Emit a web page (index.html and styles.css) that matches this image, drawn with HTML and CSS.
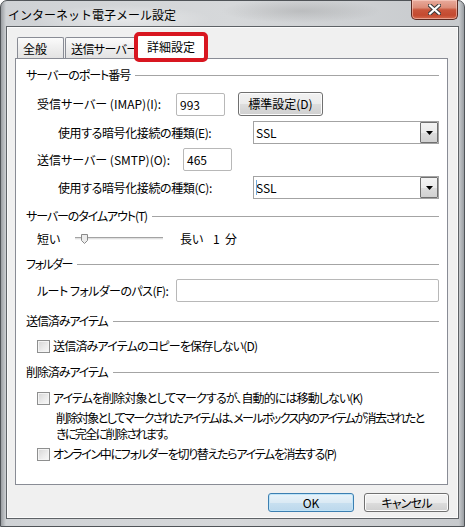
FILE: index.html
```html
<!DOCTYPE html>
<html lang="ja">
<head>
<meta charset="utf-8">
<title>インターネット電子メール設定</title>
<link rel="stylesheet" href="styles.css">
</head>
<body>
<div class="window">
  <div class="titlebar">
    <span class="title">インターネット電子メール設定</span>
    <div class="close">
      <svg width="13" height="11" viewBox="0 0 13 11">
        <path d="M2 1.5 L11 9.5 M11 1.5 L2 9.5" stroke="#3b3b3b" stroke-width="4.2" stroke-linecap="square"/>
        <path d="M2 1.5 L11 9.5 M11 1.5 L2 9.5" stroke="#ffffff" stroke-width="2.2" stroke-linecap="square"/>
      </svg>
    </div>
  </div>
  <div class="client">
    <div class="tabs">
      <div class="tab first">全般</div>
      <div class="tab second">送信サーバー</div>
      <div class="tab active">詳細設定<span class="mark"></span></div>
    </div>
    <div class="panel">
      <div class="group r-a"><span class="ls10">サーバーのポート番号</span><i></i></div>

      <div class="row r-b">
        <span class="lbl w139">受信サーバー (IMAP)(I):</span>
        <div class="input w49">993</div>
        <div class="btn std">標準設定(D)</div>
      </div>

      <div class="row r-c">
        <span class="lbl sub w195 ls04">使用する暗号化接続の種類(E):</span>
        <div class="combo"><span>SSL</span><b class="drop"><svg width="7" height="4" viewBox="0 0 7 4"><path d="M0 0 H7 L3.5 4 Z" fill="#000"/></svg></b></div>
      </div>

      <div class="row r-d">
        <span class="lbl w146">送信サーバー (SMTP)(O):</span>
        <div class="input w49">465</div>
      </div>

      <div class="row r-e">
        <span class="lbl sub w195 ls04">使用する暗号化接続の種類(C):</span>
        <div class="combo focus"><span>SSL</span><b class="drop"><svg width="7" height="4" viewBox="0 0 7 4"><path d="M0 0 H7 L3.5 4 Z" fill="#000"/></svg></b></div>
      </div>

      <div class="group r-f"><span class="ls11">サーバーのタイムアウト(T)</span><i></i></div>

      <div class="row r-g">
        <span class="lbl w38">短い</span>
        <svg class="slider" width="88" height="12" viewBox="0 0 88 12">
          <rect x="0" y="4" width="88" height="1" fill="#a3a3a3"/>
          <rect x="0" y="5" width="88" height="1" fill="#e0e0e0"/>
          <rect x="0" y="6" width="88" height="1" fill="#f4f4f4"/>
          <path d="M6.5 1.5 H12.5 V7.5 L9.5 10.5 L6.5 7.5 Z" fill="#ececec" stroke="#8a8a8a"/>
        </svg>
        <span class="lbl long">長い</span>
        <span class="lbl">1&nbsp;&nbsp;分</span>
      </div>

      <div class="group r-h"><span class="ls15">フォルダー</span><i></i></div>

      <div class="row r-i">
        <span class="lbl w139 ls05">ルート フォルダーのパス(F):</span>
        <div class="input grow"></div>
      </div>

      <div class="group r-j"><span class="ls11">送信済みアイテム</span><i></i></div>

      <div class="row r-k">
        <span class="check"></span><span class="lbl ls08">送信済みアイテムのコピーを保存しない(D)</span>
      </div>

      <div class="group r-l"><span class="ls11">削除済みアイテム</span><i></i></div>

      <div class="row r-m">
        <span class="check"></span><span class="lbl ls085">アイテムを削除対象としてマークするが、自動的には移動しない(K)</span>
      </div>
      <p class="desc">削除対象としてマークされたアイテムは、メールボックス内のアイテムが消去されたと<br>きに完全に削除されます。</p>

      <div class="row r-o">
        <span class="check"></span><span class="lbl ls13">オンライン中にフォルダーを切り替えたらアイテムを消去する(P)</span>
      </div>
    </div>
    <div class="buttons">
      <div class="btn ok">OK</div>
      <div class="btn cancel"><span class="ls08">キャンセル</span></div>
    </div>
  </div>
</div>
</body>
</html>
```

FILE: styles.css
```css
* { box-sizing: border-box; }

html, body {
  margin: 0;
  padding: 0;
}

body {
  width: 465px;
  height: 527px;
  overflow: hidden;
  background: #ffffff;
  font-family: "Noto Sans CJK JP", "Noto Sans", sans-serif;
  font-size: 12px;
  font-feature-settings: "palt";
  color: #000;
}

.ls04 { letter-spacing: -0.4px; }
.ls05 { letter-spacing: -0.55px; }
.ls08 { letter-spacing: -0.8px; }
.ls085 { letter-spacing: -0.9px; }
.ls10 { letter-spacing: -1px; }
.ls11 { letter-spacing: -1.1px; }
.ls13 { letter-spacing: -1.3px; }
.ls15 { letter-spacing: -1.5px; }

.window {
  position: relative;
  width: 465px;
  height: 527px;
  border: 1px solid #505458;
  border-radius: 7px 7px 0 0;
  padding: 0 6px 8px 6px;
  display: flex;
  flex-direction: column;
  background:
    radial-gradient(ellipse 90px 14px at 120px 18px, rgba(255,255,255,0.45), rgba(255,255,255,0)),
    radial-gradient(ellipse 80px 12px at 300px 10px, rgba(120,120,120,0.25), rgba(120,120,120,0)),
    linear-gradient(90deg, #9a9ea2 0px, #cfd2d5 5px, #d6d8da 50%, #c7cacd calc(100% - 5px), #9a9ea2 100%);
}

.titlebar {
  height: 26px;
  display: flex;
  align-items: center;
  padding: 2px 0 0 1px;
}

.title {
  line-height: 16px;
  color: #000;
  font-feature-settings: normal;
}

.close {
  position: absolute;
  top: -1px;
  left: 410px;
  width: 47px;
  height: 20px;
  border: 1px solid #5c2a22;
  border-top: none;
  border-radius: 0 0 5px 5px;
  background: linear-gradient(180deg, #e9ab9c 0%, #dc8c78 40%, #c9553b 52%, #c44a30 80%, #d46a4e 100%);
  box-shadow: inset 0 0 0 1px rgba(255,220,210,0.5);
  display: flex;
  align-items: center;
  justify-content: center;
}

.client {
  flex: 1;
  position: relative;
  background: #f0f0f0;
  border: 1px solid #fbfbfb;
  box-shadow: 0 0 0 1px #5e6266;
  padding: 9px 0 0 7px;
  display: flex;
  flex-direction: column;
}

/* Tabs */
.tabs {
  height: 21px;
  display: flex;
  align-items: flex-end;
  padding-left: 2px;
  position: relative;
  z-index: 2;
}

.tab {
  height: 21px;
  border: 1px solid #898c95;
  border-bottom: none;
  border-radius: 2px 2px 0 0;
  background: linear-gradient(180deg, #fbfbfb 0%, #eeeeee 50%, #e3e3e3 100%);
  padding: 0 0 0 5px;
  line-height: 21px;
  white-space: nowrap;
  overflow: hidden;
}

.tab.first {
  width: 47px;
  margin-right: 1px;
}

.tab.second {
  width: 76px;
  letter-spacing: -0.6px;
}

.tab.active {
  position: relative;
  overflow: visible;
  width: 69px;
  height: 25px;
  margin-left: -4px;
  margin-bottom: -1px;
  background: #ffffff;
  padding: 0 0 0 9px;
  line-height: 23px;
}

.mark {
  position: absolute;
  left: -4px;
  top: -3px;
  width: 74px;
  height: 30px;
  border: 4px solid #d81620;
  border-radius: 5px;
}

/* Panel */
.panel {
  width: 433px;
  height: 427px;
  background: #ffffff;
  border: 1px solid #898c95;
  padding: 7px 8px 0 10px;
  display: flex;
  flex-direction: column;
}

.group {
  height: 18px;
  display: flex;
  align-items: center;
  gap: 5px;
  line-height: 18px;
  white-space: nowrap;
}

.group i {
  flex: 1;
  height: 1px;
  background: #a4a4a4;
  margin-top: 1px;
}

.row {
  display: flex;
  align-items: center;
  padding-left: 11px;
  white-space: nowrap;
}

.lbl {
  line-height: 18px;
  flex: none;
}

.lbl.sub { margin-left: 21px; }
.w38 { width: 38px; }
.w139 { width: 139px; }
.w146 { width: 146px; }
.w195 { width: 195px; }

.r-a { margin-top: 0; }
.r-b { margin-top: 8px; height: 24px; }
.r-c { margin-top: 5px; height: 23px; }
.r-d { margin-top: 4px; height: 23px; }
.r-e { margin-top: 5px; height: 23px; }
.r-f { margin-top: 8px; }
.r-g { margin-top: 5px; height: 18px; }
.r-h { margin-top: 7px; }
.r-i { margin-top: 6px; height: 23px; }
.r-j { margin-top: 10px; }
.r-k { margin-top: 7px; height: 18px; }
.r-l { margin-top: 8px; }
.r-m { margin-top: 8px; height: 18px; }
.r-o { margin-top: 3px; height: 18px; }

.input {
  height: 23px;
  border: 1px solid #b8b8b8;
  border-radius: 2px;
  background: #fff;
  padding: 0 0 0 3px;
  line-height: 21px;
}

.w49 { width: 49px; }
.grow { flex: 1; }

.combo {
  width: 186px;
  height: 23px;
  border: 1px solid #a3a3a3;
  background: #fff;
  display: flex;
  align-items: center;
  justify-content: space-between;
  padding: 0 0 0 2px;
  position: relative;
}

.combo span { line-height: 18px; }

.combo.focus::before {
  content: "";
  position: absolute;
  left: 2px;
  top: 3px;
  width: 1px;
  height: 15px;
  background: #6fa9dc;
}

.drop {
  width: 18px;
  height: 21px;
  border: 1px solid #707070;
  border-radius: 1px;
  background: linear-gradient(180deg, #f4f4f4 0%, #ebebeb 50%, #dddddd 51%, #d1d1d1 100%);
  display: flex;
  align-items: center;
  justify-content: center;
}

.slider { flex: none; margin-top: -1px; }
.long { margin-left: 17px; width: 33px; }

.check {
  flex: none;
  width: 13px;
  height: 13px;
  border: 1px solid #8e8f8f;
  background: linear-gradient(135deg, #d5d5d5 0%, #ebebeb 55%, #f9f9f9 100%);
  box-shadow: inset 0 0 0 1px #f4f4f4;
  margin-right: 3px;
}

.desc {
  margin: 3px 0 0 30px;
  line-height: 16px;
  white-space: nowrap;
  letter-spacing: -1.6px;
}

/* Buttons */
.btn {
  height: 19px;
  border: 1px solid #707070;
  border-radius: 3px;
  background: linear-gradient(180deg, #f2f2f2 0%, #ebebeb 50%, #dddddd 51%, #cfcfcf 100%);
  box-shadow: inset 0 0 0 1px #fcfcfc;
  display: flex;
  align-items: center;
  justify-content: center;
  line-height: 16px;
  flex: none;
}

.btn.std {
  width: 85px;
  height: 24px;
  margin-left: 13px;
}

.buttons {
  display: flex;
  justify-content: flex-end;
  gap: 10px;
  margin-top: 8px;
  padding-right: 8px;
}

.btn.ok {
  width: 86px;
  border-color: #3c7fb1;
  background: linear-gradient(180deg, #e8f3fa 0%, #dbeaf4 50%, #c8e0f0 51%, #bcd8ec 100%);
  box-shadow: inset 0 0 0 1px #bfe4f8;
}

.btn.cancel {
  width: 85px;
}
```
